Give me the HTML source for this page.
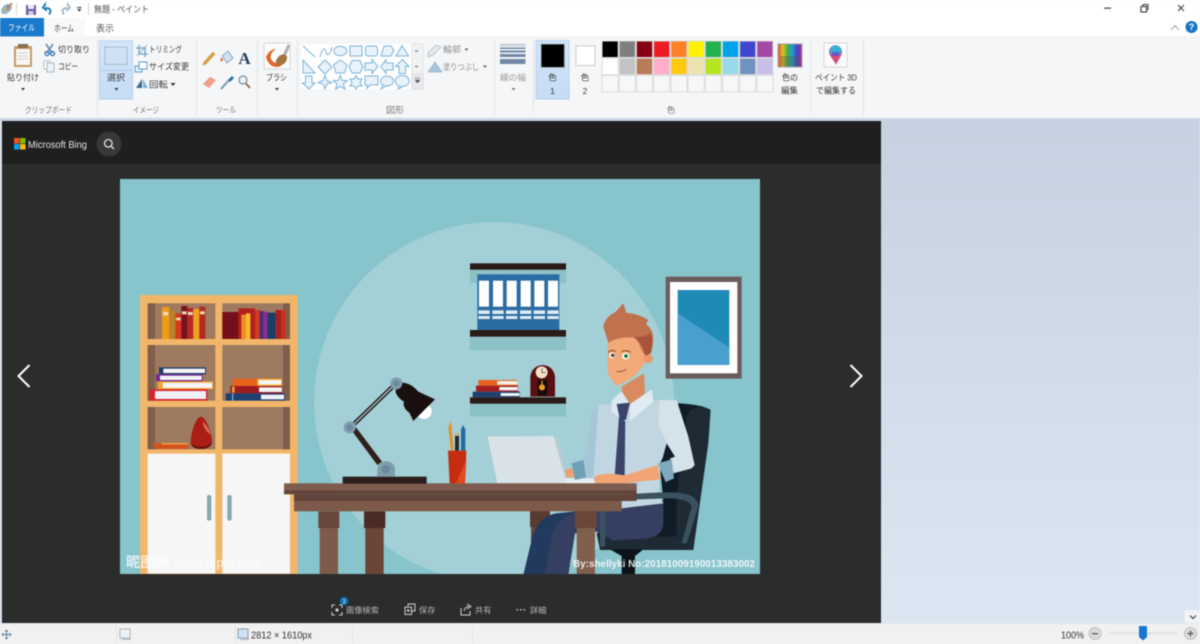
<!DOCTYPE html>
<html lang="ja"><head><meta charset="utf-8"><title>無題 - ペイント</title>
<style>
html,body{margin:0;padding:0;width:1200px;height:644px;overflow:hidden;background:#f5f6f7}
svg{display:block;filter:blur(.4px)}
text{font-family:"Liberation Sans","Noto Sans CJK JP",sans-serif;fill:#555;font-size:8.5px}
.c{text-anchor:middle}
.g{fill:#777;font-size:8.5px}
.a{fill:#3a3a3a}
.s{fill:#e8f2fa;stroke:#7db4da;stroke-width:1}
</style></head><body>
<svg width="1200" height="644" viewBox="0 0 1200 644" xmlns="http://www.w3.org/2000/svg">
<defs>
<linearGradient id="ws" x1="0" y1="0" x2="0" y2="1"><stop offset="0" stop-color="#c6d1e1"/><stop offset="1" stop-color="#dde7f3"/></linearGradient>
<linearGradient id="sel" x1="0" y1="0" x2="0" y2="1"><stop offset="0" stop-color="#d4e6f8"/><stop offset="1" stop-color="#c5dcf5"/></linearGradient>
<linearGradient id="rb" x1="0" y1="0" x2="1" y2="0"><stop offset="0" stop-color="#d9483b"/><stop offset=".2" stop-color="#e8c11c"/><stop offset=".4" stop-color="#3fae4a"/><stop offset=".6" stop-color="#1f9bd8"/><stop offset=".8" stop-color="#4b3fc0"/><stop offset="1" stop-color="#b03a8c"/></linearGradient>
<clipPath id="img"><rect x="120" y="179" width="640" height="395"/></clipPath>
</defs>

<!-- chrome -->
<rect width="1200" height="37" fill="#fff"/>
<rect y="37" width="1200" height="81" fill="#f5f6f7"/>
<rect y="36.5" x="85" width="1115" height="1" fill="#eeeff1"/>
<rect y="118" width="1200" height="3" fill="#c9d5e4"/>

<!-- quick access -->
<g>
<path d="M1 11 C2 6 6 3 11 4 L12 8 C10 13 5 15 2 14Z" fill="#8fb8d8"/>
<circle cx="5" cy="10" r="1.5" fill="#e5a33a"/><circle cx="8" cy="7" r="1.3" fill="#d6564a"/>
<path d="M7 10 L12 3" stroke="#b58a4a" stroke-width="1.6"/>
<rect x="16" y="3" width="1" height="12" fill="#d5d5d5"/>
<rect x="26" y="5" width="10" height="10" fill="#6f5fa8"/><rect x="28" y="5" width="6" height="4" fill="#e9e9f2"/><rect x="28.5" y="11" width="5" height="4" fill="#cfcbe3"/>
<path d="M45 6 L45 4.500 L43 7.500 L45.800 9.800 L45.800 8.200 C50 7.800 52 10.500 49 14.500" fill="none" stroke="#1f7fc4" stroke-width="2"/>
<path d="M68 6 L68 4.500 L70 7.500 L67.200 9.800 L67.200 8.200 C63 7.800 61 10.500 64 14.500" fill="none" stroke="#a8bac8" stroke-width="2"/>
<path d="M77 9 h4.500 l-2.250 2.800z" fill="#444"/><rect x="77" y="7" width="4.500" height="1" fill="#444"/>
<rect x="88" y="3" width="1" height="12" fill="#d5d5d5"/>
<text x="94" y="12.500" textLength="55" lengthAdjust="spacingAndGlyphs" style="font-size:9px;fill:#555">無題 - ペイント</text>
</g>
<!-- window buttons -->
<rect x="1104" y="7.500" width="7" height="1.300" fill="#555"/>
<rect x="1141" y="6.500" width="5.500" height="5.500" fill="none" stroke="#444" stroke-width="1.200"/><path d="M1143 6 V4.500 H1148 V9.500 H1146.500" fill="none" stroke="#444"/>
<path d="M1178 5 L1184 11 M1184 5 L1178 11" stroke="#444" stroke-width="1.100"/>
<path d="M1171 30 L1175 25.500 L1179 30" fill="none" stroke="#aaa" stroke-width="1.100"/>
<circle cx="1191.500" cy="27" r="6" fill="#1474c8"/><text x="1191.500" y="30" class="c" style="font-size:9px;font-weight:bold;fill:#fff">?</text>

<!-- tabs -->
<rect x="0" y="18" width="44" height="18.500" fill="#1979ca"/>
<text x="8" y="31" textLength="27" lengthAdjust="spacingAndGlyphs" style="fill:#fff;font-size:9px">ファイル</text>
<rect x="44" y="18" width="41" height="19" fill="#f9f9fa"/>
<text x="54" y="31.500" textLength="20" lengthAdjust="spacingAndGlyphs" style="fill:#444;font-size:9px">ホーム</text>
<text x="96" y="31.500" textLength="18" lengthAdjust="spacingAndGlyphs" style="fill:#555;font-size:9px">表示</text>

<!-- separators -->
<g fill="#e2e3e6">
<rect x="97" y="40" width="1" height="75"/><rect x="196" y="40" width="1" height="75"/><rect x="257" y="40" width="1" height="75"/><rect x="297" y="40" width="1" height="75"/>
<rect x="494" y="40" width="1" height="75"/><rect x="533" y="40" width="1" height="75"/><rect x="810" y="40" width="1" height="75"/><rect x="863" y="40" width="1" height="75"/>
</g>
<!-- group labels -->
<text x="25" y="113" class="g" textLength="47" lengthAdjust="spacingAndGlyphs">クリップボード</text>
<text x="133" y="113" class="g" textLength="26" lengthAdjust="spacingAndGlyphs">イメージ</text>
<text x="216" y="113" class="g" textLength="20" lengthAdjust="spacingAndGlyphs">ツール</text>
<text x="386" y="113" class="g" textLength="18" lengthAdjust="spacingAndGlyphs">図形</text>
<text x="671" y="113" class="c g">色</text>

<!-- clipboard -->
<rect x="14" y="46" width="18" height="21" rx="1" fill="#c99a6b"/><rect x="16" y="49" width="14" height="16" fill="#f6f6f2"/>
<rect x="18" y="44" width="10" height="4" fill="#8a6d4b"/>
<g stroke="#d3d3d3"><path d="M18 53h10M18 56h10M18 59h10"/></g>
<text x="7" y="80.500" class="a" textLength="32" lengthAdjust="spacingAndGlyphs">貼り付け</text><path d="M21 88h4l-2 2.500z" fill="#333"/>
<path d="M46 44 L52 53 M53 44 L47 53" stroke="#6d8ca8" stroke-width="1.600"/><circle cx="47" cy="53.500" r="2" fill="none" stroke="#3b78b8" stroke-width="1.400"/><circle cx="52.500" cy="53.500" r="2" fill="none" stroke="#3b78b8" stroke-width="1.400"/>
<text x="58" y="52.500" class="a" textLength="32" lengthAdjust="spacingAndGlyphs">切り取り</text>
<rect x="44" y="61" width="6" height="8" fill="#fff" stroke="#bbb"/><rect x="47" y="63" width="7" height="9" fill="#eef3f8" stroke="#a9b8c6"/>
<text x="58" y="69.500" class="a" textLength="20" lengthAdjust="spacingAndGlyphs">コピー</text>

<!-- select -->
<rect x="99.500" y="41" width="33" height="58" fill="url(#sel)" stroke="#b4d2ef"/>
<rect x="100" y="70" width="32" height="1" fill="#aecdec"/>
<rect x="105" y="47" width="22" height="17.500" fill="#cfe1f4" stroke="#7f96ad" stroke-dasharray="1 1"/>
<text x="107" y="80.500" class="a" textLength="18" lengthAdjust="spacingAndGlyphs">選択</text><path d="M114.500 88h4l-2 2.500z" fill="#333"/>
<path d="M139 45 V54 H148 M136 48 H145 V57" fill="none" stroke="#6fa5cd" stroke-width="1.300"/><path d="M137 56 L147 45" stroke="#6fa5cd" stroke-width=".8"/>
<text x="149" y="52.500" class="a" textLength="33" lengthAdjust="spacingAndGlyphs">トリミング</text>
<rect x="135" y="66" width="7" height="6" fill="#eaf2f9" stroke="#5e9bcb"/><rect x="139" y="62" width="8" height="7" fill="#fff" stroke="#5e9bcb"/>
<text x="149" y="69.500" class="a" textLength="40" lengthAdjust="spacingAndGlyphs">サイズ変更</text>
<path d="M136 88 L142 79 V88Z" fill="#3c6d96"/><path d="M143 79 L148 88 H143Z" fill="#7fb4dd"/>
<text x="149" y="87.500" class="a" textLength="19" lengthAdjust="spacingAndGlyphs">回転</text><path d="M170.500 83h5l-2.500 3z" fill="#333"/>

<!-- tools -->
<path d="M204 62 L213 52 L215 54 L206 64 L203 65Z" fill="#e0a040" stroke="#a87b33" stroke-width=".5"/>
<path d="M222 56 L228 51 L233 58 L227 63Z" fill="#cfe0ee" stroke="#7a9ab5" stroke-width=".8"/><path d="M221 58 C219 62 223 63 223 59Z" fill="#e0674a"/>
<text x="244.500" y="64" class="c" style="font-family:'Liberation Serif',serif;font-size:17px;font-weight:bold;fill:#28425f">A</text>
<path d="M203 84 L210 77 L216 80 L209 88Z" fill="#ef9d8d"/>
<path d="M221 89 L229 80" stroke="#7e98ad" stroke-width="2"/><path d="M228 80 L232 76 L234 78 L230 82Z" fill="#1f6fa8"/>
<circle cx="243" cy="80" r="4" fill="#e8f1f8" stroke="#7e8c98" stroke-width="1.200"/><path d="M246 83.500 L250 88" stroke="#8c6f4c" stroke-width="1.800"/>

<!-- brush -->
<rect x="264" y="43" width="26" height="26" fill="#fbfbfb" stroke="#d8d8d8"/>
<path d="M266 57 C268 52 272 49 276 49 C271 52 270 56 271 59 C273 63 277 64 279 62 L281 66 C274 69 268 65 266 57Z" fill="#e0662a"/>
<path d="M284 56 L289 45" stroke="#b0b0b0" stroke-width="3"/>
<ellipse cx="281.500" cy="60" rx="6.500" ry="4.500" transform="rotate(-45 281.500 60)" fill="#a37343"/>
<text x="266" y="80.500" class="a" textLength="21" lengthAdjust="spacingAndGlyphs">ブラシ</text><path d="M275 88h4l-2 2.500z" fill="#333"/>

<!-- shapes -->
<rect x="301" y="44" width="111" height="45" fill="#fff"/>
<rect x="412" y="44" width="11" height="45" fill="#f1f2f4" stroke="#e3e3e3"/>
<rect x="412" y="74" width="11" height="15" fill="#e8e9ec" stroke="#dcdcdc"/>
<path d="M415 51h3M415 66.500h3" stroke="#666"/><path d="M415 78h5M415 80h5l-2.500 3z" fill="#555" stroke="#555" stroke-width=".5"/>
<g class="s">
<path d="M303 46 L315 57" fill="none"/>
<path d="M320 57 C322 48 325 47 326 52 C327 57 330 55 332 47" fill="none"/>
<ellipse cx="340.300" cy="51" rx="6.500" ry="4.800"/>
<rect x="350" y="46" width="12" height="10"/>
<rect x="365.500" y="46" width="12" height="10" rx="2.500"/>
<path d="M381 56 L384 46 H391 L394 50 L391 56Z"/>
<path d="M402 45.500 L408.500 56 H396Z"/>
<path d="M303 60 L315 73 H303Z"/>
<path d="M325 60 L332 67 L325 74 L318 67Z"/>
<path d="M340.300 60 L347 65 L344.500 73 H336 L333.500 65Z"/>
<path d="M352 60.500 H360 L363 67 L360 73 H352 L349 67Z"/>
<path d="M365 63 H372 V59.500 L378 66.500 L372 73.500 V70 H365Z"/>
<path d="M393 63 H386 V59.500 L381 66.500 L386 73.500 V70 H393Z"/>
<path d="M402.300 59.500 L409 66.500 H405.500 V73.500 H399 V66.500 H395.500Z"/>
<path d="M305.500 76 H312 V83 H315 L309 89 L302.500 83 H305.500Z"/>
<path d="M325 75.500 L327 80.500 L332 82.500 L327 84 L325 89 L323 84 L318 82.500 L323 80.500Z"/>
<path d="M340.300 75.500 L342.300 80.500 L347.300 80.500 L343.500 84 L345 89 L340.300 86.500 L335.500 89 L337 84 L333.300 80.500 L338.300 80.500Z"/>
<path d="M356 75.500 L358 79 L362 79 L360 82.500 L362 86 L358 86 L356 89 L354 86 L350 86 L352 82.500 L350 79 L354 79Z"/>
<path d="M365 76 H378 V85 H370 L367 88.500 V85 H365Z"/>
<ellipse cx="387" cy="81" rx="6.500" ry="5"/><path d="M383 85 L381 89 L386 86" />
<ellipse cx="402.300" cy="81" rx="7" ry="5.500"/><path d="M399 86 L398 89 L402 87"/>
</g>
<path d="M428 53 L436 45 L441 47 L433 55 L428 57Z" fill="#e5e8eb" stroke="#b6bec5" stroke-width=".8"/>
<text x="443" y="52.500" textLength="18" lengthAdjust="spacingAndGlyphs" style="fill:#8f8f8f">輪郭</text><path d="M464.500 48.500h4l-2 2.500z" fill="#666"/>
<path d="M428 72 L435 62 L442 72Z" fill="#a8c6de" stroke="#9fb0c0" stroke-width=".7"/>
<text x="443" y="70" textLength="36" lengthAdjust="spacingAndGlyphs" style="fill:#8f8f8f">塗りつぶし</text><path d="M483 65.500h4l-2 2.500z" fill="#666"/>
<!-- line width -->
<rect x="500" y="43.500" width="25.500" height="3" fill="#ccd5de"/><rect x="500" y="47.500" width="25.500" height="1.500" fill="#7088a6"/><rect x="500" y="50.500" width="25.500" height="2" fill="#7088a6"/><rect x="500" y="54" width="25.500" height="3" fill="#7088a6"/><rect x="500" y="59" width="25.500" height="5" fill="#7088a6"/>
<text x="500" y="80.500" textLength="26" lengthAdjust="spacingAndGlyphs" style="fill:#999">線の幅</text><path d="M511.500 88h4l-2 2.500z" fill="#777"/>

<!-- color 1/2 -->
<rect x="536" y="40.500" width="33" height="58.500" fill="url(#sel)" stroke="#b4d2ef"/>
<rect x="541" y="44" width="23.500" height="23.500" fill="#000" stroke="#aab0b8"/>
<text x="552.500" y="80.500" class="c a">色</text><text x="552.500" y="94" class="c a">1</text>
<rect x="576" y="46" width="19" height="19.500" fill="#fff" stroke="#ccc"/>
<text x="585" y="80.500" class="c a">色</text><text x="585" y="94" class="c a">2</text>

<!-- palette -->
<g stroke="#dcdcdc">
<rect x="602" y="41" width="16.200" height="16.500" fill="#000"/><rect x="619.200" y="41" width="16.200" height="16.500" fill="#7f7f7f"/><rect x="636.400" y="41" width="16.200" height="16.500" fill="#880015"/><rect x="653.600" y="41" width="16.200" height="16.500" fill="#ed1c24"/><rect x="670.800" y="41" width="16.200" height="16.500" fill="#ff7f27"/><rect x="688" y="41" width="16.200" height="16.500" fill="#fff200"/><rect x="705.200" y="41" width="16.200" height="16.500" fill="#22b14c"/><rect x="722.400" y="41" width="16.200" height="16.500" fill="#00a2e8"/><rect x="739.600" y="41" width="16.200" height="16.500" fill="#3f48cc"/><rect x="756.800" y="41" width="16.200" height="16.500" fill="#a349a4"/>
<rect x="602" y="58.200" width="16.200" height="16.500" fill="#fff"/><rect x="619.200" y="58.200" width="16.200" height="16.500" fill="#c3c3c3"/><rect x="636.400" y="58.200" width="16.200" height="16.500" fill="#b97a57"/><rect x="653.600" y="58.200" width="16.200" height="16.500" fill="#ffaec9"/><rect x="670.800" y="58.200" width="16.200" height="16.500" fill="#ffc90e"/><rect x="688" y="58.200" width="16.200" height="16.500" fill="#efe4b0"/><rect x="705.200" y="58.200" width="16.200" height="16.500" fill="#b5e61d"/><rect x="722.400" y="58.200" width="16.200" height="16.500" fill="#99d9ea"/><rect x="739.600" y="58.200" width="16.200" height="16.500" fill="#7092be"/><rect x="756.800" y="58.200" width="16.200" height="16.500" fill="#c8bfe7"/>
<g fill="#f6f7f8"><rect x="602" y="75.400" width="16.200" height="16.500"/><rect x="619.200" y="75.400" width="16.200" height="16.500"/><rect x="636.400" y="75.400" width="16.200" height="16.500"/><rect x="653.600" y="75.400" width="16.200" height="16.500"/><rect x="670.800" y="75.400" width="16.200" height="16.500"/><rect x="688" y="75.400" width="16.200" height="16.500"/><rect x="705.200" y="75.400" width="16.200" height="16.500"/><rect x="722.400" y="75.400" width="16.200" height="16.500"/><rect x="739.600" y="75.400" width="16.200" height="16.500"/><rect x="756.800" y="75.400" width="16.200" height="16.500"/></g>
</g>
<rect x="778" y="44" width="24" height="23" fill="url(#rb)" stroke="#a0a0a0"/>
<rect x="780" y="56" width="20" height="10" fill="#555" opacity=".35"/>
<text x="782" y="80.500" class="a" textLength="16" lengthAdjust="spacingAndGlyphs">色の</text><text x="781" y="93.500" class="a" textLength="17" lengthAdjust="spacingAndGlyphs">編集</text>
<rect x="824" y="43" width="23" height="24" fill="#fbfbfb" stroke="#d8d8d8"/>
<path d="M829 52 C829 43 842 43 842 52 C842 56 838 60 836 65 C834 60 829 56 829 52Z" fill="#d94a7c"/><path d="M830 49 C832 44 840 44 841.500 50 L841 54 H830Z" fill="#35b1d8"/><path d="M832 52h7v4h-7z" fill="#6b55c8"/>
<text x="815" y="80.500" class="a" textLength="42" lengthAdjust="spacingAndGlyphs">ペイント 3D</text><text x="816" y="93.500" class="a" textLength="40" lengthAdjust="spacingAndGlyphs">で編集する</text>

<!-- workspace -->
<rect x="0" y="121" width="1200" height="503" fill="url(#ws)"/>
<rect x="0" y="121" width="2" height="503" fill="#d5dde8"/>
<rect x="2" y="121" width="879" height="503" fill="#2b2c2c"/>
<rect x="2" y="121" width="879" height="43" fill="#1f1f1f"/>
<rect x="1185" y="610" width="15" height="14" fill="#f1f3f6"/>
<path d="M1190 615.500 L1193 618.500 L1196 615.500" fill="none" stroke="#444" stroke-width="1.200"/>

<!-- bing header -->
<rect x="14" y="138" width="5.500" height="5.500" fill="#f25022"/><rect x="20" y="138" width="5.500" height="5.500" fill="#7fba00"/><rect x="14" y="144" width="5.500" height="5.500" fill="#00a4ef"/><rect x="20" y="144" width="5.500" height="5.500" fill="#ffb900"/>
<text x="28" y="148" textLength="59" lengthAdjust="spacingAndGlyphs" style="font-size:10.400px;fill:#e4e4e4">Microsoft Bing</text>
<circle cx="109" cy="144" r="12.500" fill="#383838"/>
<circle cx="108.300" cy="143.300" r="3.800" fill="none" stroke="#e0e0e0" stroke-width="1.300"/><path d="M111 146 L114 149" stroke="#e0e0e0" stroke-width="1.300"/>
<path d="M29.500 365 L18.500 376 L29.500 387" fill="none" stroke="#fff" stroke-width="2"/>
<path d="M850.500 365 L861.500 376 L850.500 387" fill="none" stroke="#fff" stroke-width="2"/>

<!-- illustration -->
<g clip-path="url(#img)">
<rect x="120" y="179" width="640" height="395" fill="#87c4cc"/>
<circle cx="494" cy="402" r="180" fill="#a3cfd6"/>

<!-- bookcase, zoom coordinates -->
<g transform="translate(120,280) scale(.33333)">
<rect x="60" y="45" width="473" height="840" fill="#f2b66a"/>
<g fill="#9d7a60">
<rect x="83" y="70" width="203" height="107"/><rect x="307" y="70" width="203" height="107"/>
<rect x="83" y="195" width="203" height="167"/><rect x="307" y="195" width="203" height="167"/>
<rect x="83" y="381" width="203" height="127"/><rect x="307" y="381" width="203" height="127"/>
</g>
<g fill="#7f5f4c">
<rect x="83" y="70" width="22" height="107"/><rect x="489" y="70" width="21" height="107"/>
<rect x="83" y="195" width="22" height="167"/><rect x="489" y="195" width="21" height="167"/>
<rect x="83" y="381" width="22" height="127"/><rect x="489" y="381" width="21" height="127"/>
</g>
<rect x="126" y="81" width="22" height="96" fill="#ee9a1a"/><rect x="148" y="92" width="18" height="85" fill="#b9822a"/><rect x="166" y="100" width="18" height="77" fill="#d6391f"/><rect x="184" y="78" width="18" height="99" fill="#7a1220"/><rect x="202" y="84" width="18" height="93" fill="#b62a22"/><rect x="220" y="87" width="18" height="90" fill="#f0a11e"/><rect x="238" y="80" width="18" height="97" fill="#b62a22"/>
<g fill="#f2d9b0"><rect x="129" y="96" width="16" height="10"/><rect x="186" y="94" width="14" height="9"/><rect x="204" y="96" width="14" height="9"/><rect x="240" y="94" width="14" height="9"/><rect x="168" y="113" width="14" height="8"/></g>
<rect x="307" y="96" width="57" height="81" fill="#741019"/><rect x="355" y="85" width="50" height="92" fill="#b3201c"/><rect x="364" y="104" width="14" height="73" fill="#ee8e22"/><rect x="378" y="100" width="13" height="77" fill="#f4bd2e"/><rect x="405" y="90" width="14" height="87" fill="#cf3a20"/><rect x="419" y="93" width="11" height="84" fill="#4e2a78"/><rect x="430" y="95" width="12" height="82" fill="#8a2c93"/><rect x="442" y="98" width="25" height="79" fill="#1b3d68"/><rect x="467" y="90" width="17" height="87" fill="#a8201c"/><rect x="484" y="90" width="13" height="87" fill="#c9301f"/>

<rect x="117" y="262" width="141" height="21" fill="#1d3f68"/><rect x="130" y="266" width="125" height="13" fill="#f3f3f5"/>
<rect x="108" y="283" width="140" height="21" fill="#75269a"/><rect x="120" y="287" width="125" height="13" fill="#f3f3f5"/>
<rect x="113" y="304" width="167" height="24" fill="#f2a12d"/><rect x="128" y="308" width="148" height="16" fill="#f5f5f7"/>
<rect x="89" y="328" width="173" height="34" fill="#d9212f"/><rect x="105" y="333" width="153" height="24" fill="#eef0f6"/>
<rect x="338" y="296" width="148" height="22" fill="#e8631c"/><rect x="412" y="296" width="74" height="22" fill="#f5a623"/><rect x="415" y="300" width="69" height="14" fill="#f5f5f5"/>
<rect x="331" y="318" width="157" height="22" fill="#9c1a20"/><rect x="417" y="322" width="69" height="14" fill="#f5f5f5"/><rect x="336" y="320" width="8" height="18" fill="#f2a12d"/>
<rect x="317" y="340" width="177" height="22" fill="#1f3f70"/><rect x="423" y="344" width="69" height="14" fill="#f0f3f8"/><rect x="336" y="340" width="4" height="22" fill="#6db0d8"/>

<path d="M96 490 H210 L202 507 H104Z" fill="#d1531c"/><path d="M125 489 H205 V494 H125Z" fill="#f09a3a"/>
<path d="M243 410 C225 412 212 465 212 485 C212 500 225 507 243 507 C262 507 276 500 276 485 C276 465 260 412 243 410Z" fill="#ab1e16"/>
<path d="M212 485 C215 505 270 505 276 485 C276 500 262 507 243 507 C225 507 212 500 212 485Z" fill="#6e0f0c"/>
<path d="M248 425 C262 435 270 455 272 462 C260 460 250 440 248 425Z" fill="#d96a58"/>

<rect x="83" y="521" width="203" height="360" fill="#f6f6f6"/><rect x="307" y="521" width="203" height="360" fill="#f6f6f6"/>
<rect x="261" y="645" width="13" height="77" rx="6" fill="#88a6b2"/><rect x="322" y="645" width="13" height="77" rx="6" fill="#88a6b2"/>
</g>

<!-- wall shelves, binders, clock, frame -->
<g transform="translate(460,250) scale(.33333)">
<rect x="30" y="59" width="288" height="40" fill="#8cc1c5"/>
<rect x="52" y="73" width="246" height="167" fill="#2a6ca4"/>
<rect x="30" y="40" width="288" height="19" fill="#2a1b19"/>
<g fill="#fff">
<rect x="57" y="92" width="30" height="78"/><rect x="99" y="92" width="30" height="78"/><rect x="140" y="92" width="30" height="78"/><rect x="182" y="92" width="30" height="78"/><rect x="223" y="92" width="30" height="78"/><rect x="264" y="92" width="30" height="78"/>
</g>
<g fill="#dfe9f2">
<rect x="55" y="181" width="34" height="11"/><rect x="97" y="181" width="34" height="11"/><rect x="138" y="181" width="34" height="11"/><rect x="180" y="181" width="34" height="11"/><rect x="221" y="181" width="34" height="11"/><rect x="262" y="181" width="34" height="11"/>
<rect x="55" y="198" width="34" height="9"/><rect x="97" y="198" width="34" height="9"/><rect x="138" y="198" width="34" height="9"/><rect x="180" y="198" width="34" height="9"/><rect x="221" y="198" width="34" height="9"/><rect x="262" y="198" width="34" height="9"/>
</g>
<rect x="30" y="260" width="288" height="40" fill="#8cc1c5"/>
<rect x="30" y="240" width="288" height="20" fill="#2a1b19"/>
<rect x="30" y="461" width="288" height="39" fill="#8cc1c5"/>
<rect x="55" y="390" width="117" height="17" fill="#e8631c"/><rect x="112" y="393" width="60" height="11" fill="#f5f0e4"/>
<rect x="48" y="407" width="126" height="18" fill="#a31c20"/><rect x="118" y="411" width="55" height="10" fill="#f5f5f5"/>
<rect x="38" y="425" width="142" height="17" fill="#1f3f70"/><rect x="122" y="429" width="57" height="9" fill="#f0f3f8"/>
<path d="M211 440 V385 C211 332 285 332 285 385 V440Z" fill="#5b1012"/>
<circle cx="245" cy="367" r="18" fill="#f3e1cc"/><path d="M246 354 V368 H257" fill="none" stroke="#333" stroke-width="2"/>
<rect x="233" y="390" width="29" height="47" fill="#180d0c"/><circle cx="246" cy="412" r="9" fill="#eea01e"/><rect x="244" y="392" width="4" height="18" fill="#d19a3a"/>
<rect x="30" y="442" width="288" height="19" fill="#2a1b19"/>
<rect x="617" y="80" width="228" height="306" fill="#6d5c5c"/>
<rect x="630" y="96" width="202" height="274" fill="#fff"/>
<rect x="653" y="120" width="155" height="225" fill="#1f8ab6"/>
<path d="M653 190 L808 293 V345 H653Z" fill="#4a9fd1"/>
</g>

<!-- chair -->
<g transform="translate(500,400) scale(.33333)">
<path d="M535 10 C570 12 610 15 632 30 L625 130 L580 450 H300 L290 400 L490 300 L480 200 L510 130Z" fill="#1f2b34"/>
<path d="M535 10 C560 12 580 15 600 20 C570 25 560 40 558 70 L530 280 V410 H470 L490 300 L480 190 L510 130Z" fill="#0f1b25"/>
<path d="M330 448 H430 L405 468 V525 H365 V468Z" fill="#0c1218"/>
</g>

<!-- far desk leg -->
<rect x="530" y="511" width="20" height="16" fill="#5b3a2f"/><rect x="531" y="527" width="18" height="47" fill="#6a4538"/>

<!-- laptop -->
<g transform="translate(280,370) scale(.33333)">
<path d="M820 198 L835 205 L866 340 H850Z" fill="#b6cdd2"/>
<path d="M623 200 L820 198 L860 340 H652Z" fill="#d9e3e7"/>
<rect x="855" y="325" width="130" height="16" fill="#e6edf0"/>
</g>

<!-- man -->
<g transform="translate(500,400) scale(.33333)">
<path d="M490 300 V372 C490 395 470 410 440 415 L340 422 L290 395 L225 400 L205 525 H70 L100 400 C115 365 135 345 170 340 L260 330 L360 325Z" fill="#353f61"/>
<path d="M70 525 L100 400 C115 365 135 345 170 340 L228 335 C190 350 165 370 155 410 L135 525Z" fill="#213a5e"/>
<path d="M300 15 C275 25 268 45 268 80 L265 150 L245 190 L255 235 L300 220Z" fill="#a5c6d6"/>
<path d="M295 15 L480 0 L505 130 L480 190 L478 285 L490 310 L365 325 V250 L280 240Z" fill="#c2d6e2"/>
<path d="M215 190 L250 180 L258 232 L225 240Z" fill="#6f9fb6"/>
<path d="M195 210 L216 204 L224 232 L200 232Z" fill="#f0a070"/>
<path d="M365 285 C420 280 480 275 530 278 C570 280 595 295 595 320 L560 430 L545 430 L575 320 C570 300 540 295 500 295 L365 300 C330 300 318 315 318 340 L315 440 L300 440 L300 340 C300 305 325 287 365 285Z" fill="#3b525e"/>
<path d="M350 15 H388 L376 50 L374 228 H344 L357 50Z" fill="#3a4569"/>
<path d="M480 0 H530 L565 110 L584 195 L575 205 L520 220 L500 130 L475 70Z" fill="#d4e2ea"/>
<path d="M473 190 L515 178 L522 235 L497 246Z" fill="#7fa9bd"/>
<path d="M282 232 C295 222 320 220 345 222 L375 226 L472 195 L482 238 L370 250 L285 250Z" fill="#f2a474"/>
<path d="M500 130 L525 170 L485 185Z" fill="#0f1b25"/>
</g>
<g transform="translate(460,250) scale(.33333)">
<path d="M485 410 L488 450 L510 470 L555 430 L552 370Z" fill="#d98a5e"/>
<path d="M445 275 C440 320 442 360 445 375 L467 407 C490 400 525 385 550 345 L560 310 L535 265 L490 250Z" fill="#f2a877"/>
<circle cx="564" cy="326" r="14" fill="#eb9a69"/>
<path d="M430 230 C435 205 450 195 465 187 C475 178 483 168 488 160 C495 170 497 180 497 188 C520 190 545 197 565 210 C562 215 560 218 558 222 C575 235 582 255 579 275 C578 290 575 302 572 310 L556 318 L545 300 C540 285 530 265 520 262 C495 262 470 262 445 278Z" fill="#c0714d"/>
<path d="M520 262 C540 270 550 290 556 318 L572 310 C578 290 580 265 570 245 C565 260 550 260 520 262Z" fill="#a9543a"/>
<path d="M445 307 C452 300 462 300 467 305 M485 306 C492 300 505 302 512 307" fill="none" stroke="#7c4a30" stroke-width="3"/>
<ellipse cx="456" cy="316" rx="8" ry="9" fill="#fff"/><circle cx="458" cy="316" r="5" fill="#2f3a3a"/>
<ellipse cx="497" cy="318" rx="11" ry="10" fill="#fff"/><circle cx="498" cy="318" r="6" fill="#2fa35c"/><circle cx="498" cy="318" r="2.800" fill="#111"/>
<path d="M470 364 C480 366 492 364 498 358" fill="none" stroke="#a5553a" stroke-width="3"/>
<path d="M455 452 L485 424 L510 462 L498 515 L455 485Z" fill="#dbe8f1"/>
<path d="M576 418 L510 462 L510 515 L580 455Z" fill="#dfeaf2"/>
<path d="M470 462 L510 458 L498 510 L480 510Z" fill="#3a4569"/>
</g>

<!-- desk -->
<g transform="translate(280,370) scale(.33333)">
<rect x="115" y="424" width="63" height="50" fill="#67473c"/><rect x="119" y="474" width="55" height="140" fill="#7d5a49"/>
<rect x="252" y="424" width="64" height="50" fill="#4a2b25"/><rect x="256" y="474" width="55" height="140" fill="#6a4538"/>
</g>
<rect x="575" y="511" width="21.700" height="17" fill="#6b4539"/><rect x="576.700" y="528" width="18.300" height="46" fill="#815f4d"/>
<rect x="294" y="501" width="327.700" height="10.300" fill="#7d5a49"/>
<rect x="294" y="494.300" width="342.700" height="6.700" fill="#62443a"/>
<rect x="284" y="490.500" width="352.700" height="3.800" fill="#62443a"/>
<rect x="284" y="483.300" width="352.700" height="7.200" fill="#7d5b4e"/>

<!-- lamp & cup -->
<g transform="translate(280,370) scale(.33333)">
<rect x="188" y="320" width="252" height="21" fill="#2a1d1b"/>
<path d="M292 320 V300 C292 265 345 265 345 300 V320Z" fill="#7f9dad"/><circle cx="318" cy="298" r="13" fill="#6a8a9c"/>
<path d="M214 180 L228 172 L306 275 L292 285Z" fill="#2f1f1c"/>
<path d="M220 158 L337 45 M226 164 L343 51" stroke="#2a1b19" stroke-width="4.500"/>
<circle cx="209" cy="172" r="18" fill="#7f9dad"/><circle cx="209" cy="172" r="9" fill="#6a8a9c"/>
<circle cx="432" cy="124" r="23" fill="#fff"/>
<path d="M362 38 C385 38 400 48 415 65 L465 88 L400 153 L388 128 C375 120 368 105 372 95 C355 85 345 70 347 60Z" fill="#180f0e"/>
<circle cx="349" cy="40" r="18" fill="#7f9dad"/><circle cx="349" cy="40" r="9" fill="#6a8a9c"/>
<path d="M505 170 L513 155 L521 240 H512Z" fill="#e68f2a"/><rect x="525" y="195" width="12" height="47" fill="#1f2a33"/><path d="M525 198 L531 186 L537 198Z" fill="#eea75a"/>
<path d="M543 242 V178 L549 165 L556 178 V242Z" fill="#246a9c"/>
<path d="M504 242 H559 L555 340 H509Z" fill="#c52c10"/><path d="M559 268 L555 340 H528Z" fill="#e2491f"/>
</g>

<text x="126" y="567" textLength="43" lengthAdjust="spacingAndGlyphs" style="font-size:14px;font-weight:bold;fill:#fff;opacity:.75">昵图网</text>
<text x="174" y="567" textLength="88" lengthAdjust="spacingAndGlyphs" style="font-size:12.500px;font-weight:bold;fill:#fff;opacity:.65">www.nipic.com</text>
<text x="573" y="567" textLength="182" lengthAdjust="spacingAndGlyphs" style="font-size:9.800px;font-weight:bold;fill:#fff;opacity:.85">By:shellyki No:20181009190013383002</text>
</g>

<!-- bottom actions -->
<g fill="none" stroke="#d0d0d0" stroke-width="1">
<path d="M332 608 V605 H335 M339 605 H342 V608 M342 612 V615 H339 M335 615 H332 V612"/>
<rect x="405" y="607" width="6.500" height="7.500"/><path d="M408 606 V604 H415 V611 H412"/>
<path d="M461 608 V615 H470 V611"/><path d="M464 611 C465 607 467 606.500 469 606.500 M467 604 L471 606.500 L467 609"/>
</g>
<circle cx="337" cy="610" r="1.600" fill="#d0d0d0"/>
<path d="M406.500 610.500h3.500M408.200 609v3.200" stroke="#d0d0d0"/>
<circle cx="344" cy="601" r="4.300" fill="#0d6fb0"/><text x="344" y="603.500" class="c" style="font-size:6px;fill:#cfe6f5">3</text>
<text x="346" y="613" style="font-size:8.200px;fill:#b5b5b5">画像検索</text>
<text x="419" y="613" style="font-size:8.200px;fill:#b5b5b5">保存</text>
<text x="475" y="613" style="font-size:8.200px;fill:#b5b5b5">共有</text>
<g fill="#c8c8c8"><rect x="516.500" y="609" width="1.500" height="1.500"/><rect x="520" y="609" width="1.500" height="1.500"/><rect x="523.500" y="609" width="1.500" height="1.500"/></g>
<text x="530" y="613" style="font-size:8.200px;fill:#b5b5b5">詳細</text>

<!-- status bar -->
<rect y="624" width="1200" height="20" fill="#f1f1f1"/>
<rect y="623" width="1200" height="1" fill="#e3e6ea"/>
<g fill="#e4e4e4"><rect x="116" y="625" width="1" height="19"/><rect x="235" y="625" width="1" height="19"/><rect x="352" y="625" width="1" height="19"/><rect x="472" y="625" width="1" height="19"/></g>
<path d="M6.500 630 V639 M2 634.500 H11" stroke="#5c7f9a" stroke-width="1"/><path d="M5 631.500 L6.500 630 L8 631.500 M5 637.500 L6.500 639 L8 637.500 M3.500 633 L2 634.500 L3.500 636 M9.500 633 L11 634.500 L9.500 636" fill="none" stroke="#5c7f9a" stroke-width=".8"/>
<rect x="120" y="629" width="10" height="9" fill="#eef2f5" stroke="#a9b4be"/><rect x="122" y="638" width="9" height="2" fill="#b9bec4"/>
<rect x="238" y="629" width="10" height="9" fill="#cfe2f1" stroke="#8aa0b3"/><rect x="240" y="638" width="9" height="2" fill="#b9bec4"/>
<text x="251" y="638.500" textLength="61" lengthAdjust="spacingAndGlyphs" style="font-size:10.200px;fill:#333">2812 × 1610px</text>
<text x="1061" y="638.500" textLength="23" lengthAdjust="spacingAndGlyphs" style="font-size:10.200px;fill:#333">100%</text>
<circle cx="1095" cy="633.500" r="6" fill="#dcdcdc" stroke="#bdbdbd"/><rect x="1092" y="633" width="6" height="1.300" fill="#555"/>
<rect x="1109" y="632" width="68" height="2.500" fill="#e4e4e4"/>
<path d="M1139 626 H1147 V637 L1143 640.500 L1139 637Z" fill="#1478d4"/>
<circle cx="1190.500" cy="633.500" r="6" fill="#dcdcdc" stroke="#bdbdbd"/><path d="M1187.500 633.500h6M1190.500 630.500v6" stroke="#555" stroke-width="1.200"/>
</svg>
</body></html>
